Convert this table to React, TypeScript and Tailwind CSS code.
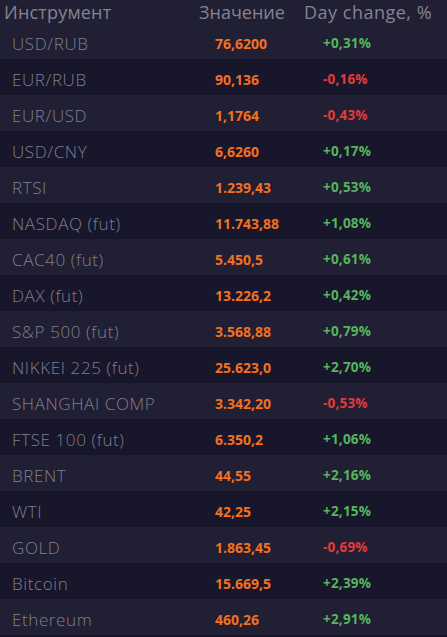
import React from "react";

const rows: [string, string, string][] = [
  ["USD/RUB", "76,6200", "+0,31%"],
  ["EUR/RUB", "90,136", "-0,16%"],
  ["EUR/USD", "1,1764", "-0,43%"],
  ["USD/CNY", "6,6260", "+0,17%"],
  ["RTSI", "1.239,43", "+0,53%"],
  ["NASDAQ (fut)", "11.743,88", "+1,08%"],
  ["CAC40 (fut)", "5.450,5", "+0,61%"],
  ["DAX (fut)", "13.226,2", "+0,42%"],
  ["S&P 500 (fut)", "3.568,88", "+0,79%"],
  ["NIKKEI 225 (fut)", "25.623,0", "+2,70%"],
  ["SHANGHAI COMP", "3.342,20", "-0,53%"],
  ["FTSE 100 (fut)", "6.350,2", "+1,06%"],
  ["BRENT", "44,55", "+2,16%"],
  ["WTI", "42,25", "+2,15%"],
  ["GOLD", "1.863,45", "-0,69%"],
  ["Bitcoin", "15.669,5", "+2,39%"],
  ["Ethereum", "460,26", "+2,91%"],
];

export default function App() {
  return (
    <div className="w-[447px] h-[637px] bg-[#17162a] overflow-hidden" style={{ fontFamily: '"Open Sans", sans-serif' }}>
      <div className="h-[23px] bg-[#201f33] flex items-center text-[#85848f] text-[18px] leading-none">
        <div className="w-[199px] pl-[4px] tracking-[0.2px]">Инструмент</div>
        <div className="w-[105px]">Значение</div>
        <div className="tracking-[0.5px]">Day change, %</div>
      </div>
      {rows.map(([name, val, ch], i) => (
        <div
          key={name}
          className={`h-[36px] pt-[5px] flex items-center ${i % 2 === 0 ? "bg-[#201f33]" : "bg-[#17162a]"}`}
        >
          <div className="w-[215px] pl-[12px] text-[17px] font-light text-[#807f8c] tracking-[0.6px] leading-none">{name}</div>
          <div className="w-[108px] text-[14px] font-bold text-[#f3701f] leading-none">{val}</div>
          <div className={`text-[13.5px] font-bold tracking-[0.2px] leading-none ${ch.startsWith("-") ? "text-[#e23b3b]" : "text-[#56b45c]"}`}>{ch}</div>
        </div>
      ))}
    </div>
  );
}
